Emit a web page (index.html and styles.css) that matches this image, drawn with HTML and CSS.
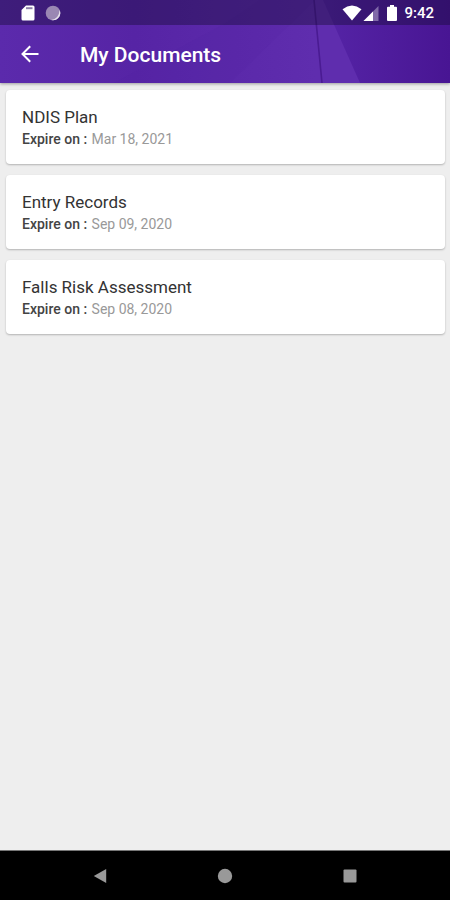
FILE: index.html
```html
<!DOCTYPE html>
<html lang="en">
<head>
  <meta charset="utf-8">
  <meta name="viewport" content="width=device-width, initial-scale=1">
  <title>My Documents</title>
  <link rel="stylesheet" href="styles.css">
</head>
<body>
  <header class="header">
    <svg class="header-art" viewBox="0 0 450 83" preserveAspectRatio="none" aria-hidden="true">
      <defs>
        <linearGradient id="base" x1="0" x2="1" y1="0" y2="0">
          <stop offset="0" stop-color="#5b2aac"/>
          <stop offset="0.3" stop-color="#5624a5"/>
          <stop offset="0.7" stop-color="#5f2dae"/>
          <stop offset="1" stop-color="#5f2dae"/>
        </linearGradient>
        <linearGradient id="fold" x1="0" x2="1" y1="0" y2="0">
          <stop offset="0" stop-color="#5524a6"/>
          <stop offset="1" stop-color="#481593"/>
        </linearGradient>
      </defs>
      <rect width="450" height="83" fill="url(#base)"/>
      <path d="M114 83 L222 25 L260 0 H315 L230 83 Z" fill="#4f1f9f" opacity="0.15"/>
      <path d="M323 0 L360 83 H450 V0 Z" fill="url(#fold)"/>
      <path d="M314 0 L322 83" fill="none" stroke="#4a1b92" stroke-width="1.6"/>
    </svg>

    <div class="status-bar">
      <svg width="14" height="16" viewBox="0 0 14 16">
        <path d="M5 0.5 H12 Q13.5 0.5 13.5 2 V14 Q13.5 15.5 12 15.5 H2 Q0.5 15.5 0.5 14 V5 Z" fill="#fff"/>
        <path d="M5 3.2 H11.5" stroke="#8f80aa" stroke-width="2"/>
      </svg>
      <svg class="sync" width="16" height="16" viewBox="0 0 16 16">
        <circle cx="8" cy="8" r="7.3" fill="#9a87b3"/>
        <path d="M14.6 5 A7.2 7.2 0 0 1 6 14.9 Q14 14 14.6 5 Z" fill="#e4dfea"/>
      </svg>
      <svg class="wifi" width="20" height="16" viewBox="0 0 20 16">
        <path d="M0.5 4.2 Q10 -3 19.5 4.2 L10 15.5 Z" fill="#fff"/>
      </svg>
      <svg class="signal" width="16" height="15" viewBox="0 0 16 15">
        <path d="M15.5 0 V15 H0.5 Z" fill="#8069a8"/>
        <path d="M10 5.5 V15 H0.5 Z" fill="#fff"/>
      </svg>
      <svg class="battery" width="10" height="16" viewBox="0 0 10 16">
        <path d="M3 0 H7 V1.7 H9 Q10 1.7 10 2.7 V15 Q10 16 9 16 H1 Q0 16 0 15 V2.7 Q0 1.7 1 1.7 H3 Z" fill="#fff"/>
      </svg>
      <span class="time">9:42</span>
    </div>

    <div class="app-bar">
      <button class="back" type="button" aria-label="Back">
        <svg width="18" height="18" viewBox="0 0 18 18">
          <path d="M17.5 9 H1.8 M9.2 1.2 L1.5 9 L9.2 16.8" fill="none" stroke="#fff" stroke-width="2"/>
        </svg>
      </button>
      <h1 class="title">My Documents</h1>
    </div>
  </header>

  <main class="documents">
    <article class="card">
      <h2 class="card-title">NDIS Plan</h2>
      <p class="expiry"><b>Expire on :</b> Mar 18, 2021</p>
    </article>
    <article class="card">
      <h2 class="card-title">Entry Records</h2>
      <p class="expiry"><b>Expire on :</b> Sep 09, 2020</p>
    </article>
    <article class="card">
      <h2 class="card-title">Falls Risk Assessment</h2>
      <p class="expiry"><b>Expire on :</b> Sep 08, 2020</p>
    </article>
  </main>

  <nav class="nav-bar">
    <button type="button" aria-label="Back">
      <svg width="14" height="16" viewBox="0 0 14 16"><path d="M13.2 1 V15 L0.8 8 Z" fill="#999"/></svg>
    </button>
    <button type="button" aria-label="Home">
      <svg width="16" height="16" viewBox="0 0 16 16"><circle cx="8" cy="8" r="7.2" fill="#999"/></svg>
    </button>
    <button type="button" aria-label="Recent apps">
      <svg width="14" height="14" viewBox="0 0 14 14"><rect x="0.5" y="0.5" width="13" height="13" rx="1" fill="#999"/></svg>
    </button>
  </nav>
</body>
</html>
```

FILE: styles.css
```css
* {
  box-sizing: border-box;
}

body {
  margin: 0;
  min-height: 100vh;
  display: flex;
  flex-direction: column;
  background: #eee;
  color: #333;
  font-family: Roboto, "Liberation Sans", sans-serif;
}

h1, h2, p {
  margin: 0;
}

svg {
  display: block;
  flex-shrink: 0;
}

button {
  display: flex;
  align-items: center;
  justify-content: center;
  padding: 0;
  border: none;
  background: none;
  cursor: pointer;
}

.header {
  position: relative;
  color: #fff;
  box-shadow: 0 1px 3px rgba(0, 0, 0, 0.35);
}

.header-art {
  position: absolute;
  top: 0;
  left: 0;
  width: 100%;
  height: 100%;
}

.status-bar {
  position: relative;
  display: flex;
  align-items: center;
  height: 25px;
  padding: 1px 16px 0 21px;
  background: rgba(20, 10, 50, 0.4);
}

.sync {
  margin-left: 10px;
}

.wifi {
  margin-left: auto;
}

.signal {
  margin-left: 1px;
}

.battery {
  margin-left: 8px;
}

.time {
  margin-left: 7px;
  font-size: 15px;
  font-weight: 500;
  line-height: 16px;
}

.app-bar {
  position: relative;
  display: flex;
  align-items: center;
  height: 58px;
  padding: 0 12px;
}

.back {
  width: 36px;
  height: 36px;
}

.title {
  margin-left: 32px;
  padding-top: 2px;
  font-size: 21px;
  font-weight: 500;
  line-height: 24px;
}

.documents {
  flex: 1;
  display: flex;
  flex-direction: column;
  gap: 11px;
  padding: 7px 5px 16px 6px;
}

.card {
  padding: 15px 16px;
  background: #fff;
  border-radius: 4px;
  box-shadow: 0 1px 2px rgba(0, 0, 0, 0.25);
}

.card-title {
  font-size: 17px;
  font-weight: 400;
  line-height: 24px;
}

.expiry {
  color: #999;
  font-size: 14px;
  line-height: 20px;
}

.expiry b {
  margin-right: 1px;
  color: #444;
  font-weight: 500;
}

.nav-bar {
  display: flex;
  justify-content: center;
  gap: 77px;
  height: 50px;
  border-top: 1px solid #777;
  background: #000;
}

.nav-bar button {
  width: 48px;
}
```
